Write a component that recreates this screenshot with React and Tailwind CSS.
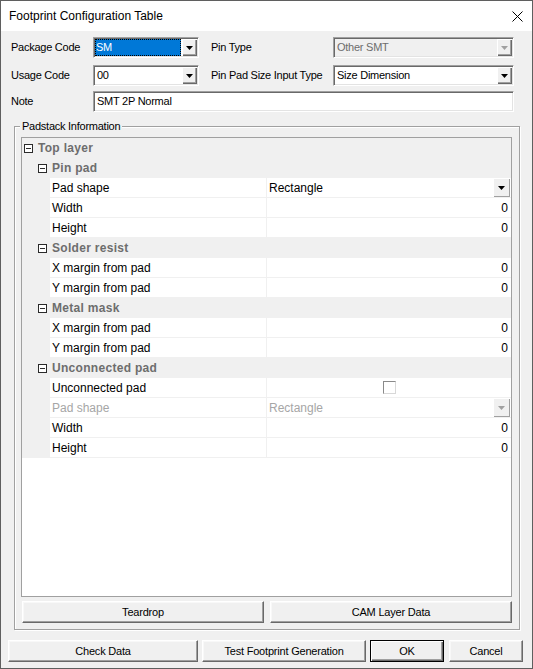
import React from "react";

function Tri({ color = "#000" }) {
  return (
    <svg width="7" height="4" viewBox="0 0 7 4">
      <polygon points="0,0 7,0 3.5,4" fill={color} />
    </svg>
  );
}

function Combo({ widthClass, text, selected, disabled }) {
  return (
    <div
      className={`${widthClass} h-[21px] flex border border-t-[#a0a0a0] border-l-[#a0a0a0] border-b-white border-r-white shadow-[inset_1px_1px_0_#696969,inset_-1px_-1px_0_#e3e3e3] p-[1px] ${
        disabled ? "bg-[#f0f0f0]" : "bg-white"
      }`}
    >
      <div className="flex-1 flex items-center min-w-0 pr-[1px]">
        {selected ? (
          <div className="h-full w-full flex items-center bg-[#0078d7] text-white pl-[1px] outline-1 outline-dotted outline-[#000] -outline-offset-1">
            {text}
          </div>
        ) : (
          <div className={`pl-[2px] ${disabled ? "text-[#6d6d6d]" : "text-black"}`}>{text}</div>
        )}
      </div>
      <div className="w-[15px] h-full flex items-center justify-center bg-[#f0f0f0] shadow-[inset_1px_1px_0_#fff,inset_-1px_-1px_0_#696969,inset_-2px_-2px_0_#a0a0a0]">
        <Tri color={disabled ? "#a0a0a0" : "#000"} />
      </div>
    </div>
  );
}

function Btn({ widthClass, children, isDefault }) {
  return (
    <div
      className={`${widthClass} h-[22px] flex items-center justify-center bg-[#f0f0f0] ${
        isDefault
          ? "border border-black shadow-[inset_1px_1px_0_#fff,inset_-1px_-1px_0_#696969,inset_-2px_-2px_0_#a0a0a0]"
          : "border border-t-white border-l-white border-b-[#696969] border-r-[#696969] shadow-[inset_-1px_-1px_0_#a0a0a0,inset_1px_1px_0_#f8f8f8]"
      }`}
    >
      {children}
    </div>
  );
}

function MinusBox() {
  return (
    <div className="w-[9px] h-[9px] border border-[#2b2b2b] bg-white flex items-center justify-center shrink-0">
      <div className="w-[5px] h-[1px] bg-[#2b2b2b]" />
    </div>
  );
}

const rows = [
  { cat: "Top layer", level: 0 },
  { cat: "Pin pad", level: 1 },
  { name: "Pad shape", value: "Rectangle", type: "select" },
  { name: "Width", value: "0" },
  { name: "Height", value: "0" },
  { cat: "Solder resist", level: 1 },
  { name: "X margin from pad", value: "0" },
  { name: "Y margin from pad", value: "0" },
  { cat: "Metal mask", level: 1 },
  { name: "X margin from pad", value: "0" },
  { name: "Y margin from pad", value: "0" },
  { cat: "Unconnected pad", level: 1 },
  { name: "Unconnected pad", type: "check" },
  { name: "Pad shape", value: "Rectangle", type: "select", disabled: true },
  { name: "Width", value: "0" },
  { name: "Height", value: "0" },
];

function GridRow({ r }) {
  if (r.cat) {
    return (
      <div
        className={`h-[20px] bg-[#f0f0f0] flex items-center gap-[5px] ${
          r.level === 0 ? "pl-[2px]" : "pl-[16px]"
        }`}
      >
        <MinusBox />
        <span className="font-bold text-[12px] text-[#6d6d6d] tracking-[0.3px]">{r.cat}</span>
      </div>
    );
  }
  return (
    <div className="h-[20px] flex text-[12px]">
      <div className="w-[28px] bg-[#f0f0f0] shrink-0" />
      <div
        className={`w-[216px] shrink-0 bg-white border-b border-[#f0f0f0] flex items-center pl-[2px] ${
          r.disabled ? "text-[#a6a6a6]" : "text-black"
        }`}
      >
        {r.name}
      </div>
      <div className="flex-1 bg-white border-b border-l border-[#f0f0f0] flex items-center">
        {r.type === "select" && (
          <div className="flex-1 h-full flex items-start">
            <span
              className={`flex-1 pl-[2px] h-[19px] flex items-center ${
                r.disabled ? "text-[#a6a6a6]" : "text-black"
              }`}
            >
              {r.value}
            </span>
            <div className="w-[17px] h-[19px] mr-[1px] bg-[#f0f0f0] flex items-center justify-center shadow-[inset_1px_1px_0_#fff,inset_-1px_-1px_0_#a0a0a0]">
              <Tri color={r.disabled ? "#a0a0a0" : "#000"} />
            </div>
          </div>
        )}
        {r.type === "check" && (
          <div className="flex-1 flex justify-center">
            <div className="w-[13px] h-[13px] bg-white border border-t-[#8a8a8a] border-l-[#8a8a8a] border-b-[#d8d8d8] border-r-[#d8d8d8]" />
          </div>
        )}
        {!r.type && <div className="flex-1 text-right pr-[3px]">{r.value}</div>}
      </div>
    </div>
  );
}

export default function App() {
  return (
    <div className="w-[533px] h-[669px] border border-[#5f5f5f] bg-[#f0f0f0] flex flex-col overflow-hidden text-[11px] text-black font-['Liberation_Sans',Arial,sans-serif]">
      <div className="h-[30px] bg-white flex items-center justify-between pl-[8px] pr-[9px] shrink-0">
        <span className="text-[12px]">Footprint Configuration Table</span>
        <svg width="11" height="11" viewBox="0 0 11 11">
          <path d="M0.5 0.5 L10.5 10.5 M10.5 0.5 L0.5 10.5" stroke="#000" strokeWidth="1" />
        </svg>
      </div>

      <div className="flex flex-col pt-[6px] pl-[10px] tracking-[-0.25px]">
        <div className="flex items-center h-[21px]">
          <div className="w-[82px]">Package Code</div>
          <Combo widthClass="w-[106px]" text="SM" selected />
          <div className="w-[122px] ml-[12px]">Pin Type</div>
          <Combo widthClass="w-[181px]" text="Other SMT" disabled />
        </div>
        <div className="flex items-center h-[21px] mt-[7px]">
          <div className="w-[82px]">Usage Code</div>
          <Combo widthClass="w-[106px]" text="00" />
          <div className="w-[122px] ml-[12px]">Pin Pad Size Input Type</div>
          <Combo widthClass="w-[181px]" text="Size Dimension" />
        </div>
        <div className="flex items-center h-[21px] mt-[5px]">
          <div className="w-[82px]">Note</div>
          <div className="w-[421px] h-[21px] flex items-center bg-white pl-[3px] border border-t-[#a0a0a0] border-l-[#a0a0a0] border-b-white border-r-white shadow-[inset_1px_1px_0_#696969,inset_-1px_-1px_0_#e3e3e3]">
            SMT 2P Normal
          </div>
        </div>
      </div>

      <div className="relative mt-[14px] ml-[13px] w-[506px] border border-[#a0a0a0] shadow-[inset_1px_1px_0_#fff,1px_1px_0_#fff] pt-[10px] pl-[6px] pr-[7px] pb-[6px] flex flex-col">
        <div className="absolute -top-[8px] left-[5px] bg-[#f0f0f0] px-[2px] tracking-[-0.25px] leading-[14px]">
          Padstack Information
        </div>
        <div className="h-[460px] border border-[#a0a0a0] bg-white flex flex-col">
          {rows.map((r, i) => (
            <GridRow key={i} r={r} />
          ))}
        </div>
        <div className="flex gap-[6px] mt-[4px] pl-[1px] tracking-[-0.2px]">
          <Btn widthClass="flex-1">Teardrop</Btn>
          <Btn widthClass="flex-1">CAM Layer Data</Btn>
        </div>
      </div>

      <div className="flex mt-[10px] ml-[7px] tracking-[-0.2px]">
        <Btn widthClass="w-[190px]">Check Data</Btn>
        <div className="w-[4px]" />
        <Btn widthClass="w-[164px]">Test Footprint Generation</Btn>
        <div className="w-[4px]" />
        <Btn widthClass="w-[74px]" isDefault>
          OK
        </Btn>
        <div className="w-[5px]" />
        <Btn widthClass="w-[74px]">Cancel</Btn>
      </div>
    </div>
  );
}
